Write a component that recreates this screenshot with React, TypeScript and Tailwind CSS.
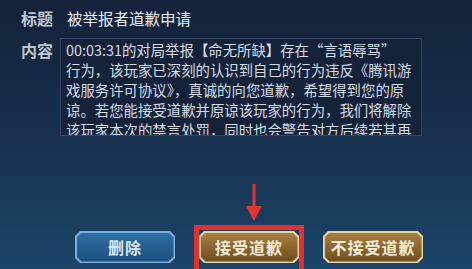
import React from 'react'

const lines = [
  '00:03:31的对局举报【命无所缺】存在“言语辱骂”',
  '行为，该玩家已深刻的认识到自己的行为违反《腾讯游',
  '戏服务许可协议》，真诚的向您道歉，希望得到您的原',
  '谅。若您能接受道歉并原谅该玩家的行为，我们将解除',
  '该玩家本次的禁言处罚，同时也会警告对方后续若其再',
]

const chamfer =
  '[clip-path:polygon(5px_0,calc(100%-5px)_0,100%_5px,100%_calc(100%-5px),calc(100%-5px)_100%,5px_100%,0_calc(100%-5px),0_5px)]'

function GameButton({ label, gold }: { label: string; gold?: boolean }) {
  return (
    <div
      className={`w-[100px] h-[32px] p-[1.5px] ${chamfer} ${
        gold ? 'bg-[#e4d3a4]' : 'bg-[#78aee0]'
      }`}
    >
      <div
        className={`w-full h-full flex items-center justify-center ${chamfer} ${
          gold
            ? 'bg-gradient-to-b from-[#a98043] via-[#8a6530] to-[#6b4b1f] text-[#f6eedb]'
            : 'bg-gradient-to-b from-[#2f6ea3] to-[#1c4f80] text-[#dbe7f2]'
        } text-[16px] font-bold tracking-[1px]`}
      >
        {label}
      </div>
    </div>
  )
}

export default function App() {
  return (
    <div
      className="relative w-[472px] h-[269px] overflow-hidden bg-gradient-to-b from-[#14223a] via-[#17304d] to-[#1c4569]"
      style={{ fontFamily: '"Noto Sans CJK SC", "Noto Sans", sans-serif' }}
    >
      <div className="flex items-center pt-[7px] pl-[21px] h-[28px]">
        <span className="w-[32px] text-[16px] font-bold text-[#bfc7d3] leading-[20px]">标题</span>
        <span className="ml-[14px] text-[15.5px] text-[#e9eaef] leading-[20px]">被举报者道歉申请</span>
      </div>

      <div className="flex mt-[10px] pl-[21px]">
        <span className="w-[32px] mt-[2px] text-[16px] font-bold text-[#bfc7d3] leading-[20px]">内容</span>
        <div className="ml-[7px] w-[362px] h-[98px] border border-[#34465f] bg-[#15233a] overflow-hidden pl-[5px] pt-[1px]">
          {lines.map((l) => (
            <div key={l} className="whitespace-nowrap text-[14.4px] leading-[20px] text-[#d6dce6]">
              {l}
            </div>
          ))}
        </div>
      </div>

      <div className="flex gap-[24px] pl-[75px] mt-[95px]">
        <GameButton label="删除" />
        <GameButton label="接受道歉" gold />
        <GameButton label="不接受道歉" gold />
      </div>

      {/* annotation overlay */}
      <div className="absolute left-[194px] top-[225px] w-[110px] h-[52px] border-[5px] border-[#e62f2b]" />
      <svg className="absolute left-[244px] top-[184px]" width="20" height="38" viewBox="0 0 20 38">
        <path d="M8.5 0 L11.5 0 L11.5 22 L18 22 L10 37 L2 22 L8.5 22 Z" fill="#e8322e" />
      </svg>
    </div>
  )
}
